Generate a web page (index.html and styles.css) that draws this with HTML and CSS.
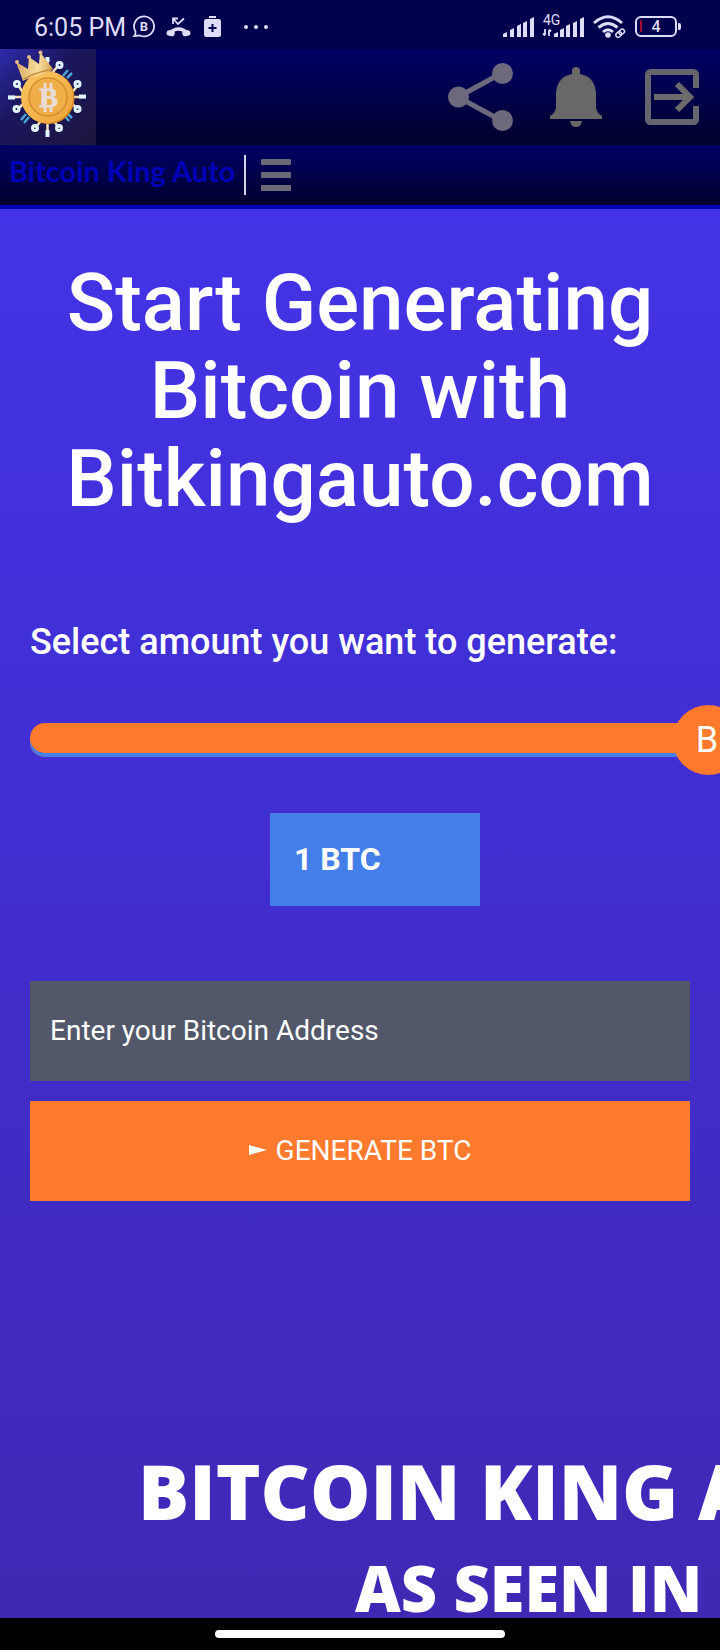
FILE: index.html
```html
<!DOCTYPE html>
<html lang="en">
<head>
<meta charset="utf-8">
<meta name="viewport" content="width=device-width, initial-scale=1">
<title>Bitcoin King Auto</title>
<link rel="stylesheet" href="styles.css">
</head>
<body>
<div class="screen">
  <div class="status">
    <div class="status-group">
      <span class="time">6:05 PM</span>
      <svg width="24" height="24" viewBox="0 0 24 24" aria-hidden="true">
        <path d="M1.500 16.500A10 10 0 1 1 6 20.500L0.200 21Q2 19 1.500 16.500Z" fill="none" stroke="#dedcf6" stroke-width="1.800"/>
        <text x="10" y="16" class="chat-letter">B</text>
      </svg>
      <svg width="26" height="24" viewBox="0 0 26 24" aria-hidden="true" fill="none" stroke="#dedcf6">
        <path d="M3 18.500Q12.500 9.500 22 18.500" stroke-width="3.500"/>
        <path d="M3.300 18L6 18.500M21.700 18L19 18.500" stroke-width="5.500" stroke-linecap="round"/>
        <path d="M7 9V3.500H12M7 3.500L12 9L18 3.500" stroke-width="1.800"/>
      </svg>
      <svg width="26" height="24" viewBox="0 0 26 24" aria-hidden="true">
        <rect x="9" y="1" width="7" height="2" fill="#dedcf6"/>
        <rect x="4" y="4" width="17" height="18" rx="2.500" fill="#dedcf6"/>
        <path d="M12.500 9V17M8.500 13H16.500" stroke="#00004c" stroke-width="2"/>
      </svg>
      <svg width="36" height="24" viewBox="0 0 36 24" aria-hidden="true" fill="#dedcf6">
        <circle cx="12" cy="12" r="2"/><circle cx="22" cy="12" r="2"/><circle cx="32" cy="12" r="2"/>
      </svg>
    </div>
    <div class="status-group">
      <svg width="31" height="24" viewBox="0 0 31 24" aria-hidden="true" fill="#dedcf6">
        <path d="M0 22V19L4 17V22ZM7 22V15L11 13V22ZM14 22V11L18 9V22ZM20 22V8L24 6V22ZM27 22V4L31 2V22Z"/>
      </svg>
      <svg width="42" height="24" viewBox="0 0 42 24" aria-label="4G" fill="#dedcf6">
        <text x="1" y="10" class="net">4G</text>
        <path d="M12 22V19L16 17V22ZM18 22V15L22 13V22ZM24 22V11L28 9V22ZM31 22V8L35 6V22ZM38 22V4L42 2V22Z"/>
        <path d="M3 14V20M1 18.500L3 20.500M7 21V15M9 16.500L7 14.500" stroke="#dedcf6" stroke-width="1.800" fill="none"/>
      </svg>
      <svg width="35" height="24" viewBox="0 0 35 24" aria-hidden="true" fill="none" stroke="#dedcf6">
        <path d="M2 8Q16 -4.500 30 8M6.500 12.500Q16 4.500 25.500 12.500M11 17Q16 12.500 21 17" stroke-width="3"/>
        <circle cx="16" cy="20" r="2.800" fill="#dedcf6" stroke="none"/>
        <g transform="rotate(-42 28 18)" stroke-width="1.500">
          <rect x="23" y="16" width="6" height="4.500" rx="2.200"/>
          <rect x="27" y="16" width="6" height="4.500" rx="2.200"/>
        </g>
      </svg>
      <svg width="47" height="24" viewBox="0 0 47 24" aria-label="Battery 4 percent">
        <rect x="1" y="2" width="40" height="19" rx="5" fill="none" stroke="#dedcf6" stroke-width="2"/>
        <path d="M43 8H44Q46 8 46 10V13Q46 15 44 15H43Z" fill="#dedcf6"/>
        <rect x="5" y="5" width="2" height="12" rx="1" fill="#a80c34"/>
        <text x="21" y="17" class="charge">4</text>
      </svg>
    </div>
  </div>

  <header class="header">
    <div class="topbar">
      <svg class="logo" width="96" height="96" viewBox="0 0 96 96" role="img" aria-label="Bitcoin King Auto logo">
        <defs>
          <linearGradient id="bg" x1="0" y1="0" x2="1" y2="1"><stop offset="0" stop-color="#2d2baa"/><stop offset=".4" stop-color="#1b165c"/><stop offset="1" stop-color="#1e163f"/></linearGradient>
          <linearGradient id="gold" x1="0" y1="0" x2="1" y2="1"><stop offset="0" stop-color="#fbc661"/><stop offset="1" stop-color="#eda43a"/></linearGradient>
          <linearGradient id="crown" x1="0" y1="0" x2="1" y2="0"><stop offset="0" stop-color="#d9a963"/><stop offset=".6" stop-color="#f7de9c"/><stop offset="1" stop-color="#d7a55a"/></linearGradient>
        </defs>
        <rect width="96" height="96" fill="url(#bg)"/>
        <g stroke="#f0dfba" stroke-width="2.500">
          <path d="M8 48H86M47.500 10V86M18 36L24 45M78 36L70 46M18 60L26 52M77 60L70 52M35 79L41 72M59 79L54 72M58 17L52 24"/>
        </g>
        <g fill="none" stroke="#dff4ff" stroke-width="3">
          <circle cx="17" cy="35" r="2.500"/><circle cx="77.500" cy="35" r="2.500"/><circle cx="16.500" cy="60" r="2.500"/><circle cx="77.500" cy="60" r="2.500"/>
          <circle cx="35" cy="79" r="2.500"/><circle cx="59" cy="79" r="2.500"/><circle cx="59.500" cy="16" r="2.500"/>
          <path d="M8 48.500H15M79 47.500H86M47.500 81V88M47.500 8V13" stroke-width="4"/>
        </g>
        <path d="M63 27L68 21M67 29L72 24M21 71L26 65M24 74L29 68M64 66L69 72M67 64L72 69" stroke="#4ba3d6" stroke-width="2.500"/>
        <circle cx="48.500" cy="49" r="26" fill="#d88b23"/>
        <circle cx="47" cy="48" r="26" fill="url(#gold)"/>
        <circle cx="48" cy="48" r="19" fill="#efae48" stroke="#d1902f" stroke-width="1.500"/>
        <path d="M45 34V40M51 34V40M45 56V63M51 56V63" stroke="#e9dcd4" stroke-width="3"/>
        <text x="48.500" y="58" class="coin-letter">B</text>
        <path d="M23 32L16 13L28 20L29 8L39 15L40 3L53 20Q51 23 40 26Q30 28 23 32Z" fill="url(#crown)"/>
        <circle cx="17" cy="13" r="2" fill="#e8b78a"/><circle cx="29" cy="8" r="2" fill="#e8b78a"/><circle cx="40.500" cy="3.500" r="2" fill="#e8b78a"/>
        <path d="M24 30Q34 24 52 20" fill="none" stroke="#c98f3a" stroke-width="1.500"/>
      </svg>
      <nav class="actions" aria-label="Quick actions">
        <button type="button" aria-label="Share">
          <svg width="68" height="70" viewBox="0 0 68 70"><g fill="#6c697d" stroke="#6c697d"><path d="M55 11L11 35L55 59" fill="none" stroke-width="5"/><circle cx="11.500" cy="35" r="10.500" stroke="none"/><circle cx="55.500" cy="11.500" r="10.500" stroke="none"/><circle cx="55.500" cy="58.500" r="10.500" stroke="none"/></g></svg>
        </button>
        <button type="button" aria-label="Notifications">
          <svg width="65" height="70" viewBox="0 0 65 70" fill="#686868"><path d="M25 12V9Q25 5 29 5T33 9V12Q48 15 49 31V46Q50 51 55 54V57H3V54Q8 51 9 46V31Q10 15 25 12Z"/><path d="M23 59H35Q34 65 29 65T23 59Z"/></svg>
        </button>
        <button type="button" aria-label="Exit">
          <svg width="56" height="70" viewBox="0 0 56 70" fill="none" stroke="#65656f" stroke-width="6"><path d="M52 26V13Q52 10 49 10H7Q4 10 4 13V57Q4 60 7 60H49Q52 60 52 57V44"/><path d="M10 35H47M33 22L46 35L33 48" stroke="#6b6b6b"/></svg>
        </button>
      </nav>
    </div>
    <div class="brandbar">
      <a class="brand" href="#">Bitcoin King Auto</a>
      <button class="menu" type="button" aria-label="Menu">
        <svg width="30" height="32" viewBox="0 0 30 32" fill="#6b6878"><rect width="30" height="6" rx="1"/><rect y="13" width="30" height="6" rx="1"/><rect y="26" width="30" height="6" rx="1"/></svg>
      </button>
    </div>
  </header>

  <main class="main">
    <h1>Start Generating Bitcoin with Bitkingauto.com</h1>
    <form class="form">
      <label class="amount-label" for="amount">Select amount you want to generate:</label>
      <div class="slider">
        <input id="amount" type="range" min="0" max="1" step="0.1" value="1">
        <span class="thumb-letter" aria-hidden="true">B</span>
      </div>
      <output class="amount" for="amount">1 BTC</output>
      <input class="address" type="text" placeholder="Enter your Bitcoin Address" aria-label="Enter your Bitcoin Address">
      <button class="generate" type="button"><svg width="18" height="10" viewBox="0 0 18 10" aria-hidden="true"><path d="M0 0L18 5L0 10Z" fill="#fff"/></svg>GENERATE BTC</button>
    </form>
    <section class="press">
      <h2>BITCOIN KING AUTO</h2>
      <p>AS SEEN IN</p>
    </section>
  </main>
  <div class="homebar"><span class="pill"></span></div>
</div>
</body>
</html>
```

FILE: styles.css
```css
* { box-sizing: border-box; }

body {
  margin: 0;
  font-family: Roboto, "Liberation Sans", sans-serif;
  color: #fff;
  background: #000;
}

button, input { font: inherit; color: inherit; border: 0; border-radius: 0; }
button { padding: 0; background: none; cursor: pointer; }
svg { display: block; flex: none; overflow: visible; }

.screen {
  min-height: 100vh;
  display: flex;
  flex-direction: column;
  overflow: hidden;
}

.status {
  display: flex;
  justify-content: space-between;
  align-items: center;
  height: 49px;
  padding: 4px 38px 0 34px;
  background: #00004c;
}
.status-group { display: flex; align-items: center; gap: 8px; }
.time { padding-top: 2px; font-size: 25px; line-height: 30px; color: #dedcf6; }
.chat-letter { font-size: 13px; font-weight: 700; text-anchor: middle; fill: #dedcf6; }
.net { font-size: 14px; fill: #dedcf6; }
.charge { font-size: 16px; font-weight: 500; text-anchor: middle; fill: #dedcf6; }
.coin-letter { font: 700 28px "Liberation Serif", serif; text-anchor: middle; fill: #e9dcd4; stroke: #e9dcd4; }

.header { border-bottom: 4px solid #0000b4; }
.topbar {
  display: flex;
  justify-content: space-between;
  align-items: center;
  padding-right: 20px;
  background: linear-gradient(#000066, #00002c);
}
.actions { display: flex; gap: 32px; }
.brandbar {
  display: flex;
  align-items: center;
  height: 60px;
  padding-left: 9px;
  background: linear-gradient(#000066, #00002c);
}
.brand {
  padding-right: 8px;
  border-right: 2px solid #d4d2e4;
  font-family: Lato, sans-serif;
  font-size: 29px;
  font-weight: 700;
  line-height: 32px;
  height: 40px;
  color: #0000b8;
  text-decoration: none;
}
.menu { margin-left: 15px; }

.main {
  flex: 1;
  padding: 50px 30px 0;
  overflow: hidden;
  background: linear-gradient(#4233e6, #4028b4);
}
h1 {
  margin: 0;
  font-size: 80px;
  font-weight: 500;
  line-height: 88px;
  text-align: center;
}

.form { display: flex; flex-direction: column; margin-top: 99px; }
.amount-label { font-size: 36px; font-weight: 500; line-height: 40px; }

.slider {
  display: grid;
  align-items: center;
  width: calc(100% + 53px);
  height: 70px;
  margin-top: 43px;
}
.slider > * { grid-area: 1 / 1; }
.slider input {
  appearance: none;
  width: 100%;
  height: 34px;
  margin: 0;
  border-radius: 15px;
  background: #ff7a2d;
  box-shadow: inset 0 -4px 0 #447fe9;
}
.slider input::-webkit-slider-thumb {
  appearance: none;
  width: 70px;
  height: 70px;
  border-radius: 50%;
  background: #ff7a2d;
}
.thumb-letter {
  justify-self: end;
  width: 72px;
  font-size: 36px;
  line-height: 70px;
  text-align: center;
  pointer-events: none;
}

.amount {
  width: 210px;
  margin: 38px 0 0 240px;
  padding: 0 24px;
  font-size: 32px;
  font-weight: 700;
  line-height: 93px;
  background: #447fe9;
}

.address {
  width: 100%;
  height: 100px;
  margin-top: 75px;
  padding: 0 20px 2px;
  font-size: 28px;
  background: #525769;
}
.address::placeholder { color: #fff; opacity: 1; }

.generate {
  display: flex;
  align-items: center;
  justify-content: center;
  gap: 9px;
  height: 100px;
  margin-top: 20px;
  padding-bottom: 2px;
  font-size: 28px;
  background: #ff7a2d;
}

.press {
  margin-top: 240px;
  font-family: "Open Sans", "Noto Sans", sans-serif;
  font-weight: 800;
  white-space: nowrap;
}
.press h2 {
  margin: 0 0 0 108px;
  font-size: 76px;
  font-weight: 800;
  line-height: 100px;
}
.press p {
  margin: 17px 0 0 325px;
  font-size: 63px;
  line-height: 60px;
}

.homebar {
  display: flex;
  justify-content: center;
  align-items: center;
  height: 32px;
  background: #000;
}
.pill { width: 290px; height: 8px; border-radius: 4px; background: #fff; }
```
